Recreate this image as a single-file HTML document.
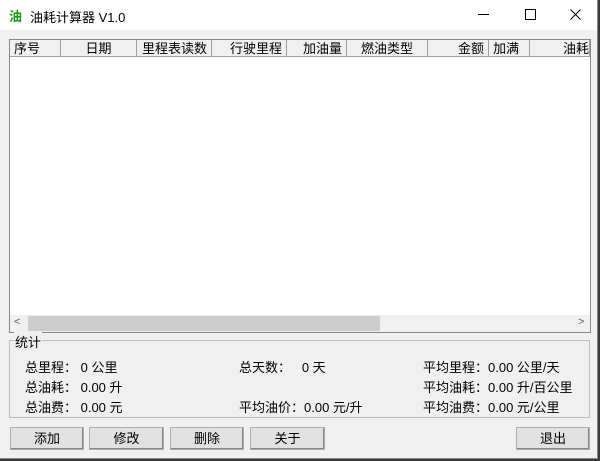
<html><head><style>
body{margin:0;width:600px;height:461px;overflow:hidden;background:#3a3a3a;font-family:"Liberation Sans","Noto Sans CJK SC",sans-serif;font-size:12px;color:#000}
.win{position:absolute;left:0;top:0;width:597px;height:458px;background:#f0f0f0;border-right:1px solid #888;border-bottom:1px solid #888}
.title{position:absolute;left:0;top:0;width:597px;height:30px;background:#fff}
.a{position:absolute;white-space:nowrap}
.lv{position:absolute;left:9px;top:39px;width:580px;height:292px;background:#fff;border:1px solid #828790}
.hd{position:absolute;top:0;height:17px;border-right:1px solid #a0a0a0;border-bottom:1px solid #a0a0a0;background:#f0f0f0;box-sizing:border-box;line-height:17px;font-size:13px;padding:0 4px}
.btn{position:absolute;top:427px;height:23px;background:#e1e1e1;border:1px solid #adadad;box-sizing:border-box;text-align:center;line-height:21px;font-size:13px;box-shadow:inset -1px -1px 0 #888}
.s{font-size:13px}
</style></head><body><div class="win">
<div class="title">
<div class="a" style="left:9px;top:6px;color:#1a9a1a;font-weight:bold;font-size:13px">油</div>
<div class="a" style="left:30px;top:7px;font-size:13px">油耗计算器 V1.0</div>
<div class="a" style="left:478px;top:14px;width:11px;height:1px;background:#000"></div>
<div class="a" style="left:525px;top:9px;width:9px;height:9px;border:1px solid #000"></div>
<svg class="a" style="left:570px;top:9px" width="11" height="11"><path d="M0.5 0.5L10.5 10.5M10.5 0.5L0.5 10.5" stroke="#000" stroke-width="1"/></svg>
</div>
<div class="lv">
<div class="hd" style="left:0;width:51px">序号</div>
<div class="hd" style="left:51px;width:76px;text-align:center">日期</div>
<div class="hd" style="left:127px;width:75px;text-align:right">里程表读数</div>
<div class="hd" style="left:202px;width:75px;text-align:right">行驶里程</div>
<div class="hd" style="left:277px;width:60px;text-align:right">加油量</div>
<div class="hd" style="left:337px;width:81px;text-align:center">燃油类型</div>
<div class="hd" style="left:418px;width:61px;text-align:right">金额</div>
<div class="hd" style="left:479px;width:41px">加满</div>
<div class="hd" style="left:520px;width:60px;text-align:right;overflow:hidden;padding-right:0">油耗</div>
<div class="a" style="left:0;top:275px;width:580px;height:17px;background:#f0f0f0"></div>
<div class="a" style="left:18px;top:276px;width:352px;height:15px;background:#cdcdcd"></div>
<div class="a" style="left:4px;top:276px;color:#606060;font-size:11px">&lt;</div>
<div class="a" style="left:568px;top:276px;color:#606060;font-size:11px">&gt;</div>
</div>
<div class="a" style="left:9px;top:340px;width:579px;height:76px;border:1px solid #bcbcbc"></div>
<div class="a s" style="left:14px;top:332px;background:#f0f0f0;padding:0 1px">统计</div>
<div class="a s" style="left:25px;top:357px">总里程： 0 公里</div>
<div class="a s" style="left:25px;top:377px">总油耗： 0.00 升</div>
<div class="a s" style="left:25px;top:397px">总油费： 0.00 元</div>
<div class="a s" style="left:239px;top:357px">总天数：&nbsp;&nbsp;&nbsp;0 天</div>
<div class="a s" style="left:239px;top:397px">平均油价：0.00 元/升</div>
<div class="a s" style="left:423px;top:357px">平均里程：0.00 公里/天</div>
<div class="a s" style="left:423px;top:377px">平均油耗：0.00 升/百公里</div>
<div class="a s" style="left:423px;top:397px">平均油费：0.00 元/公里</div>
<div class="btn" style="left:10px;width:74px">添加</div>
<div class="btn" style="left:89px;width:75px">修改</div>
<div class="btn" style="left:170px;width:74px">删除</div>
<div class="btn" style="left:250px;width:75px">关于</div>
<div class="btn" style="left:516px;width:74px">退出</div>
</div></body></html>
